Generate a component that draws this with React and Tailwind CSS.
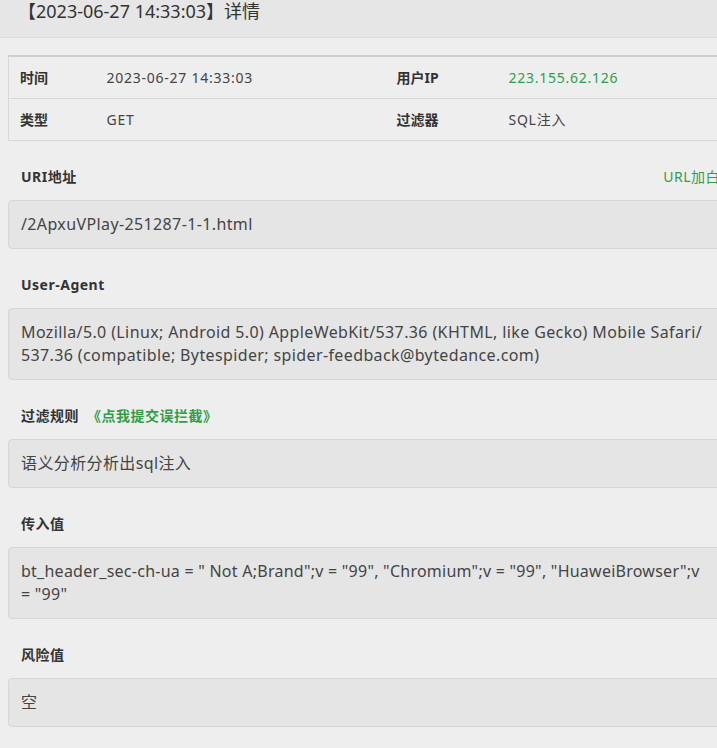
const FONT = { fontFamily: '"Noto Sans", "Noto Sans CJK SC", sans-serif' };

const Section = ({ label, extra, right, children }) => (
  <div>
    <div className="flex items-center justify-between pl-[13px] pr-[12px] pt-[26px] pb-[13px] text-[14px] leading-[20px] tracking-[0.5px]">
      <div className="flex items-center gap-[8px]">
        <span className="font-bold text-[#333]">{label}</span>
        {extra}
      </div>
      {right}
    </div>
    <div className="rounded-[4px] border border-[#d6d6d6] bg-[#e5e5e5] px-[12px] py-[12px] text-[16px] leading-[23px] tracking-[0.38px] text-[#444]">
      {children}
    </div>
  </div>
);

const App = () => {
  return (
    <div className="h-[748px] w-[717px] overflow-hidden bg-[#eeeeee]" style={FONT}>
      <div className="w-[740px]">
        <div className="h-[38px] border-b border-[#dcdcdc] bg-[#e6e6e6] pl-[18px] text-[18px] leading-[22px] text-[#333]">
          【2023-06-27 14:33:03】详情
        </div>

        <div className="px-[8px] pt-[17px]">
          <table className="w-full border-collapse border border-[#d9d9d9] text-[14px] text-[#444]">
            <tbody>
              <tr className="h-[42px] border-t-2 border-[#d0d0d0]">
                <td className="w-[86px] pl-[11px] font-bold text-[#333]">时间</td>
                <td className="w-[290px] pl-[12px] tracking-[0.75px]">2023-06-27 14:33:03</td>
                <td className="w-[112px] pl-[12px] font-bold text-[#333]">用户IP</td>
                <td className="pl-[12px] tracking-[0.75px] text-[#2e9e48]">223.155.62.126</td>
              </tr>
              <tr className="h-[42px] border-t border-[#d9d9d9]">
                <td className="pl-[11px] font-bold text-[#333]">类型</td>
                <td className="pl-[12px] tracking-[0.75px]">GET</td>
                <td className="pl-[12px] font-bold text-[#333]">过滤器</td>
                <td className="pl-[12px] tracking-[0.75px]">SQL注入</td>
              </tr>
            </tbody>
          </table>

          <Section label="URI地址" right={<span className="text-[#2e9e48]">URL加白</span>}>
            /2ApxuVPlay-251287-1-1.html
          </Section>

          <Section label="User-Agent">
            Mozilla/5.0 (Linux; Android 5.0) AppleWebKit/537.36 (KHTML, like Gecko) Mobile Safari/
            <br />
            537.36 (compatible; Bytespider; spider-feedback@bytedance.com)
          </Section>

          <Section
            label="过滤规则"
            extra={<span className="font-bold text-[#2e9e48]">《点我提交误拦截》</span>}
          >
            语义分析分析出sql注入
          </Section>

          <Section label="传入值">
            <span className="tracking-[0.25px]">
              bt_header_sec-ch-ua = " Not A;Brand";v = "99", "Chromium";v = "99", "HuaweiBrowser";v
              <br />
              = "99"
            </span>
          </Section>

          <Section label="风险值">空</Section>
        </div>
      </div>
    </div>
  );
};

export default App;
